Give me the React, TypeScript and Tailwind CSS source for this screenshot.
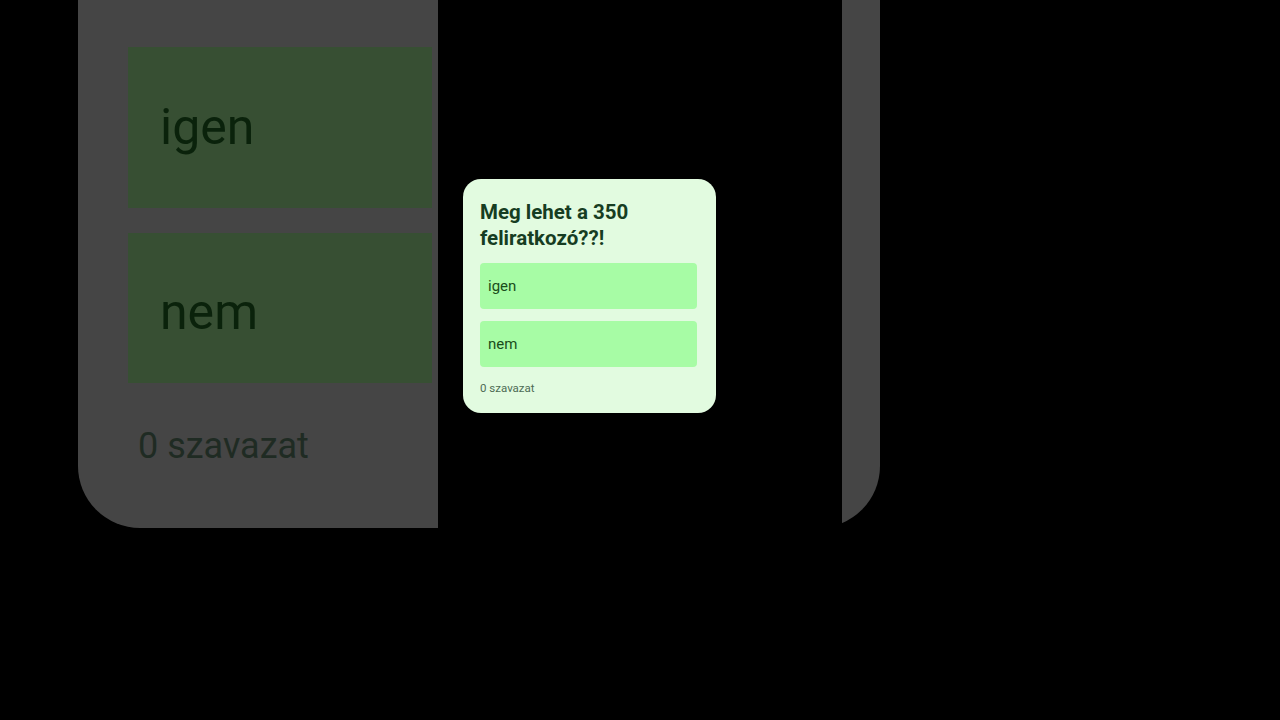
import React from 'react';

const options = ['igen', 'nem'];

function PollCard() {
  return (
    <div className="w-[253px] rounded-[18px] bg-[#e2fbe0] pl-[17px] pr-[19px] pt-[20px] pb-[16px]">
      <h2 className="text-[20.5px] font-bold leading-[26px] text-[#163d22]">
        Meg lehet a 350 feliratkozó??!
      </h2>
      <div className="mt-[12px] flex flex-col gap-[12px]">
        {options.map((o) => (
          <div key={o} className="flex h-[46px] items-center rounded-[4px] bg-[#a7fca5] px-[8px] text-[15px] text-[#1a4d1a]">
            {o}
          </div>
        ))}
      </div>
      <div className="mt-[13px] text-[11.5px] text-[#4d6b55]">0 szavazat</div>
    </div>
  );
}

export default function App() {
  return (
    <div className="relative h-[720px] w-full overflow-hidden bg-black" style={{ fontFamily: 'Roboto, "Noto Sans", sans-serif' }}>
      <div className="pl-[78px]">
        {/* enlarged background copy of the poll */}
        <div className="h-[528px] w-[802px] rounded-b-[62px] bg-[#454545] pl-[50px] pt-[47px]">
          <div className="flex flex-col gap-[25px]">
            <div className="flex h-[161px] w-[304px] items-center bg-[#374f33] pl-[32px] text-[50px] text-[#0a220b]">igen</div>
            <div className="flex h-[150px] w-[304px] items-center bg-[#374f33] pl-[32px] pt-[8px] text-[50px] text-[#0a220b]">nem</div>
          </div>
          <div className="mt-[36px] pl-[10px] text-[36px] text-[#1f2b23]">0 szavazat</div>
        </div>
      </div>
      <div className="absolute left-[438px] top-0 h-[530px] w-[404px] bg-black" />
      <div className="absolute left-[463px] top-[179px]">
        <PollCard />
      </div>
    </div>
  );
}
